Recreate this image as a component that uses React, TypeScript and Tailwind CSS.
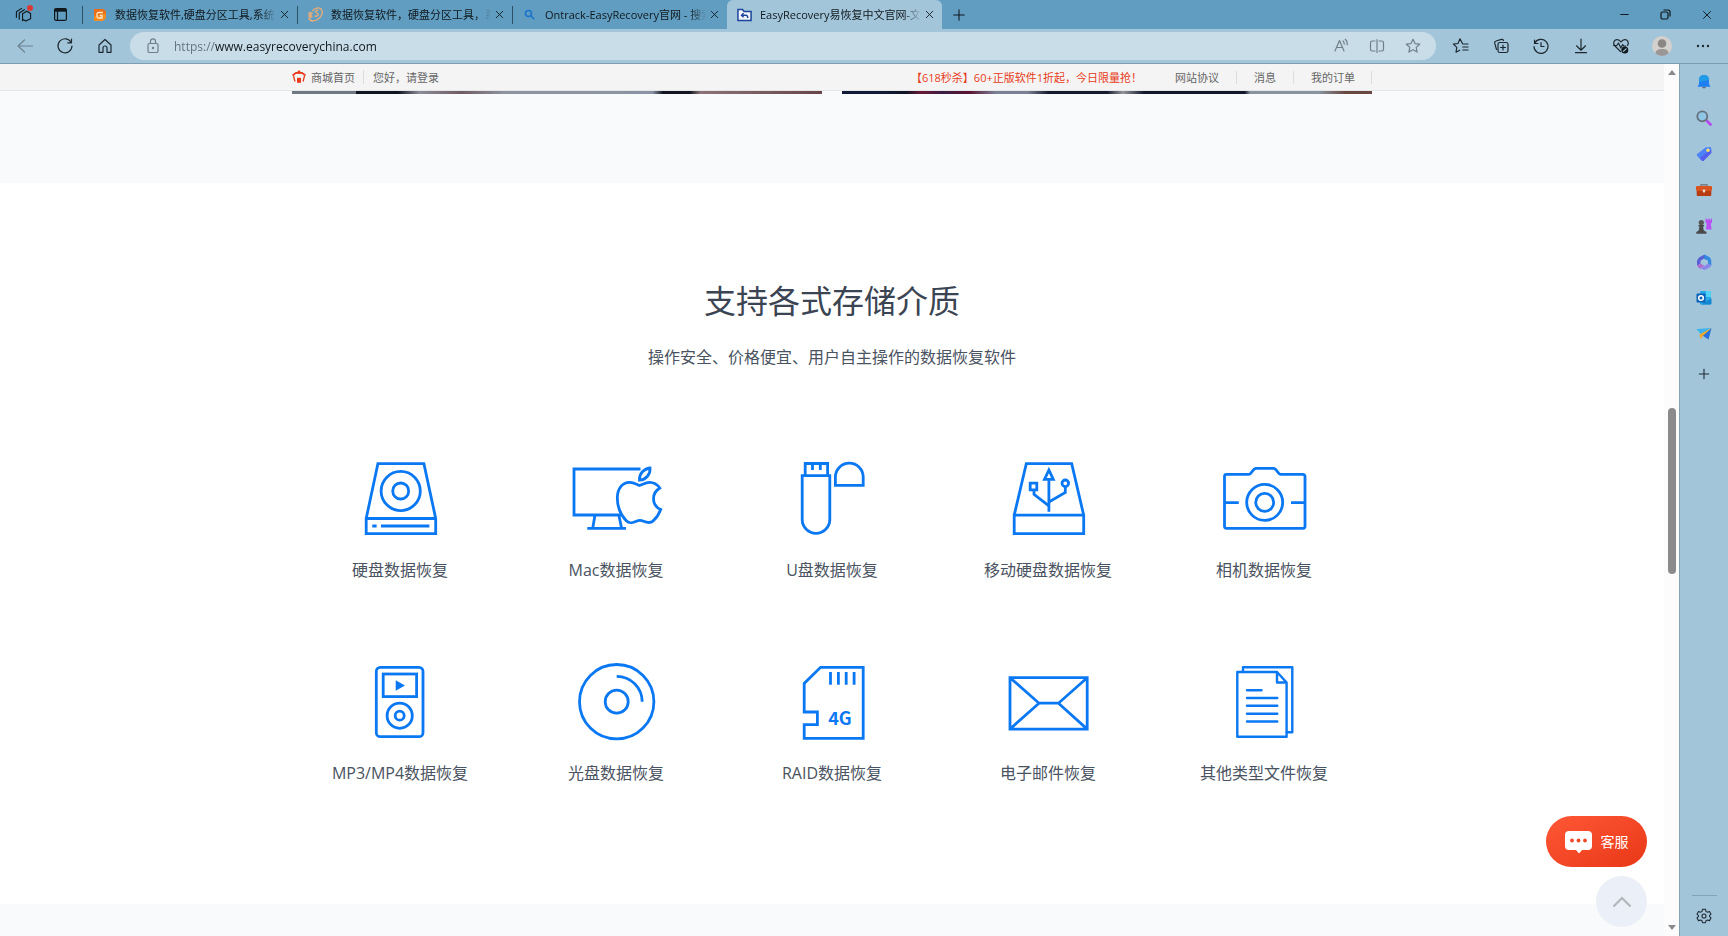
import type { ReactNode } from 'react';
import { Minus, Plus, X } from 'lucide-react';

const BLUE = '#0a78f2';

const tabs = [
  { title: '数据恢复软件,硬盘分区工具,系统', icon: <DiskGeniusLogo /> },
  { title: '数据恢复软件，硬盘分区工具，系', icon: <EsLogo /> },
  { title: 'Ontrack-EasyRecovery官网 - 搜索', icon: <SearchLogo /> },
  {
    title: 'EasyRecovery易恢复中文官网-文',
    icon: <FolderLogo />,
    active: true,
  },
];

const media = [
  { label: '硬盘数据恢复', icon: <HardDisk /> },
  { label: 'Mac数据恢复', icon: <MacIcon /> },
  { label: 'U盘数据恢复', icon: <UsbStick /> },
  { label: '移动硬盘数据恢复', icon: <PortableDisk /> },
  { label: '相机数据恢复', icon: <CameraIcon /> },
  { label: 'MP3/MP4数据恢复', icon: <PlayerIcon /> },
  { label: '光盘数据恢复', icon: <DiscIcon /> },
  { label: 'RAID数据恢复', icon: <SdCard /> },
  { label: '电子邮件恢复', icon: <MailIcon /> },
  { label: '其他类型文件恢复', icon: <FilesIcon /> },
];

/* ---------- media icons ---------- */

function Drawing({ children }: { children: ReactNode }) {
  return (
    <svg
      width="100"
      height="80"
      viewBox="0 0 100 80"
      fill="none"
      stroke={BLUE}
      strokeWidth="2.8"
      aria-hidden="true"
    >
      {children}
    </svg>
  );
}

function HardDisk() {
  return (
    <Drawing>
      <path d="M16.2 59.5 27.9 4.7h46l11.8 54.8v15.2H16.2V59.5h69.5" />
      <circle cx="50.7" cy="32" r="19.6" />
      <circle cx="50.7" cy="32" r="8" />
      <path d="M22.3 67h4.3M31 67h48.4" />
    </Drawing>
  );
}

function MacIcon() {
  return (
    <Drawing>
      <path d="M74.5 10H8v46h47.5M29 56l-2.3 13.3M52.8 56l2.8 13.3M21.3 69.4H60" />
      <path d="M73.5 26.5C69.5 24.5 67 23.3 63.5 23.3 56.5 23.3 51.3 29.5 51.3 39c0 8.5 3.5 17 9 22.8 3.5 3.7 7 1.7 10 .4 2.5-1 4.800-1 7.300 0 3.200 1.400 6.300 2.600 9.600-.3 3.300-3 5.900-7 7.500-11.400-4.500-2-7.200-6-7.200-10.800 0-4.600 2.400-8.300 6.300-10.700-2.800-4-6.500-5.700-10.300-5.700-3.700 0-6.500 2-10 3.200Z" />
      <path d="M73.5 21.2c-.6-6 3.9-11.3 10.5-12.2.6 6.2-3.8 11.7-10.5 12.2Z" />
    </Drawing>
  );
}

function UsbStick() {
  return (
    <Drawing>
      <path d="M23.2 16.6V4.5h22.4v12.1M30.5 5v6M38.3 5v6" />
      <path d="M20.2 16.7h27.6V60.5a13.8 13.8 0 0 1-27.6 0Z" />
      <path d="M53.4 26.3V18a13.9 13.9 0 0 1 27.8 0v8.3Z" />
    </Drawing>
  );
}

function PortableDisk() {
  return (
    <Drawing>
      <path d="M16.2 56.2 28.3 4.7h45.4l12 51.5v18.5H16.2V56.2h69.5" />
      <path d="M50.9 11 46.5 20.3h8.8ZM50.9 20v32.7" />
      <path d="M32.2 24.2h6.6v6.6h-6.6ZM36 31v4.3l14.900 11.600" />
      <circle cx="67.3" cy="24.3" r="3.3" />
      <path d="M67.3 27.7v5.8l-16.4 9.5" />
    </Drawing>
  );
}

function CameraIcon() {
  return (
    <Drawing>
      <path d="M12.5 15.3H35c3 0 3.4-6 7-6h17.5c3.6 0 4 6 7 6H89a2 2 0 0 1 2 2v50a2 2 0 0 1-2 2H12.500a2 2 0 0 1-2-2v-50a2 2 0 0 1 2-2Z" />
      <circle cx="50.7" cy="43.4" r="18" />
      <circle cx="50.7" cy="43.4" r="9" />
      <path d="M10.5 43.700h14.300M77 43.700h14" />
    </Drawing>
  );
}

function PlayerIcon() {
  return (
    <Drawing>
      <rect x="26.3" y="5.3" width="46.7" height="69.4" rx="4" />
      <rect x="33.2" y="12" width="33.4" height="22.6" />
      <path d="m45.7 18.3 9.3 5.2-9.3 5.2Z" fill={BLUE} stroke="none" />
      <circle cx="49.7" cy="53.7" r="12.6" />
      <circle cx="49.7" cy="53.7" r="4.5" />
    </Drawing>
  );
}

function DiscIcon() {
  return (
    <Drawing>
      <circle cx="50.7" cy="39.7" r="37.2" />
      <circle cx="50.7" cy="39.7" r="11.5" />
      <path d="M50.7 14.3A25.5 25.5 0 0 1 76.2 39.8" />
    </Drawing>
  );
}

function SdCard() {
  return (
    <Drawing>
      <path d="M38.6 5.3h42.6v71H22.2V62.7h13.2V50H22.2V21.4Z" />
      <path d="M48.5 10v12.7M56.4 10v12.7M64.2 10v12.7M72.1 10v12.7" />
      <text
        x="58"
        y="63"
        textAnchor="middle"
        fontSize="18"
        fontWeight="700"
        fontFamily="Noto Sans CJK SC, sans-serif"
        fill={BLUE}
        stroke="none"
      >
        4G
      </text>
    </Drawing>
  );
}

function MailIcon() {
  return (
    <Drawing>
      <path d="M12 15.7h77.2v51.4H12ZM12 15.7 41 41.2h19.5L89.2 15.7M12 67.1 41 41.2M89.2 67.1 60.5 41.2" />
    </Drawing>
  );
}

function FilesIcon() {
  return (
    <Drawing>
      <g strokeWidth="2.4" strokeLinejoin="round" strokeLinecap="round">
        <path d="M29 10V5.3h49.3v64.9h-5.5" />
        <path d="M23.3 10H63l9.6 10.5v54.3H23.3ZM63 10v10.5h9.6" />
        <path d="M33 28.3h14.5M33 36h30.3M33 43.8h30.3M33 51.7h30.3M33 59.5h30.3" />
      </g>
    </Drawing>
  );
}

/* ---------- tab logos ---------- */

function DiskGeniusLogo() {
  return (
    <svg width="14" height="14" viewBox="0 0 14 14" aria-hidden="true">
      <path d="M1 1h7.5A4.5 4.5 0 0 1 13 5.5v3A4.5 4.5 0 0 1 8.5 13H1Z" fill="#f58a1f" />
      <path d="M1 1h7.5A4.5 4.5 0 0 1 13 5.5L1 8Z" fill="#ee6c14" />
      <path d="M10 4.5H5.5A1.5 1.5 0 0 0 4 6v2.5A1.500 1.500 0 0 0 5.500 10H9V7.500H6.800" fill="none" stroke="#ffe9c8" strokeWidth="1.300" />
    </svg>
  );
}

function EsLogo() {
  return (
    <svg width="15" height="15" viewBox="0 0 15 15" fill="none" stroke="#efad74" strokeWidth="1.3" aria-hidden="true">
      <path d="M1 11c.5 2 2.500 3.200 5 2.800C10.500 13 14.300 9 14.300 5 14.200 1.500 11 0 7.500 1.500 6 2.200 5 3.200 4.500 4.300" />
      <path d="M4.500 6H1.200v4h3.300M1.200 8h3M10.500 3.300C8 2.800 6.800 4.500 8.200 5.500 9.800 6.300 11 7.200 9.500 8.700 8.500 9.400 7.200 9.200 6.500 8.700" />
    </svg>
  );
}

function SearchLogo() {
  return (
    <svg width="14" height="14" viewBox="0 0 14 14" fill="none" stroke="#1b74cc" strokeWidth="1.600" aria-hidden="true">
      <circle cx="5.500" cy="5.500" r="3" />
      <path d="m7.800 7.800 3.400 3.400" />
    </svg>
  );
}

function FolderLogo() {
  return (
    <svg width="15" height="14" viewBox="0 0 16 14" fill="none" aria-hidden="true">
      <path d="M1 1.200h5l1.500 2H15v9.600H1Z" fill="#f2f6fc" stroke="#1c449c" strokeWidth="1.600" />
      <path d="M7 5 4.800 7.200 7 9.400M5 7.200h4.500c1.500 0 2 1 2 3" stroke="#1c449c" strokeWidth="1.500" />
    </svg>
  );
}

/* ---------- toolbar icons ---------- */

function Line({ children, size = 18 }: { children: ReactNode; size?: number }) {
  return (
    <svg
      width={size}
      height={size}
      viewBox="0 0 18 18"
      fill="none"
      stroke="currentColor"
      strokeWidth="1.2"
      strokeLinecap="round"
      strokeLinejoin="round"
      aria-hidden="true"
    >
      {children}
    </svg>
  );
}

const pillTools = [
  {
    name: '大声朗读',
    icon: (
      <Line>
        <path d="M3 14 7.500 3.500 12 14M4.500 10.500h6M11 4c1 1 1.300 2 1.300 3.200M13.200 2.300c1.700 1.400 2.300 3.200 2 5.400" />
      </Line>
    ),
  },
  {
    name: '拆分屏幕',
    icon: (
      <Line>
        <path d="M7 14H4.200A1.700 1.700 0 0 1 2.500 12.300V5.700A1.700 1.700 0 0 1 4.200 4H7M11 4h2.800a1.700 1.700 0 0 1 1.700 1.700v6.600a1.700 1.700 0 0 1-1.700 1.700H11M9 2.500v13" />
      </Line>
    ),
  },
  {
    name: '收藏此页',
    icon: (
      <Line>
        <path d="m9 2.300 2 4.300 4.700.6-3.500 3.200.9 4.700L9 12.800l-4.100 2.300.9-4.700-3.500-3.200L7 6.600Z" />
      </Line>
    ),
  },
];

const toolbarTools = [
  {
    name: '收藏夹',
    icon: (
      <Line>
        <path d="M10.300 6.300 8 1.800 6 6.500l-4.600.6 3.400 3.300-.8 4.800 3.700-2M10.800 7H16M10.800 10H16M10.800 13H16" />
      </Line>
    ),
  },
  {
    name: '集锦',
    icon: (
      <Line>
        <path d="M4.500 12.500 2.700 6.200A1.800 1.800 0 0 1 4 4l5.500-1.600a1.800 1.800 0 0 1 2 1" />
        <rect x="6" y="5.500" width="10" height="10" rx="1.800" />
        <path d="M11 8v5M8.500 10.500h5" />
      </Line>
    ),
  },
  {
    name: '历史记录',
    icon: (
      <Line>
        <path d="M2.500 3v3.500H6M2.700 6.300A7 7 0 1 1 2 9.500M9 5.500v4h3" />
      </Line>
    ),
  },
  {
    name: '下载',
    icon: (
      <Line>
        <path d="M9 2v11M4.500 8.800 9 13.200l4.500-4.400M3.500 15.700h11" />
      </Line>
    ),
  },
  {
    name: '浏览器概要',
    icon: (
      <Line>
        <path d="M8.500 14.500 2.500 8.500C.8 6 2 3 4.700 2.700 6.500 2.500 8 3.500 9 5c1-1.500 2.500-2.500 4.300-2.300C16 3 17.200 6 15.500 8.500M1.500 8.500h3.300L6.500 6l2.300 5 1.900-3.500 1 1.500h2" />
        <circle cx="12.800" cy="13" r="3.500" fill="#11191e" stroke="none" />
        <path d="m11.400 14.200 2.700-2.300" stroke="#a3c5da" />
      </Line>
    ),
  },
];

/* ---------- sidebar icons ---------- */

function Glyph({ children }: { children: ReactNode }) {
  return (
    <svg width="16" height="16" viewBox="0 0 16 16" fill="none" aria-hidden="true">
      {children}
    </svg>
  );
}

const sidebarApps = [
  {
    name: '通知',
    icon: (
      <Glyph>
        <path d="M6 12.500h4a2 2 0 0 1-4 0Z" fill="#65707a" />
        <path d="M8 1c3.200 0 5 2.300 5 5v4l1.500 2.800h-13L3 10V6c0-2.700 1.800-5 5-5Z" fill="#1f7ff0" />
        <path d="M8 1c3.200 0 5 2.300 5 5L3 8V6c0-2.700 1.800-5 5-5Z" fill="#229be8" />
      </Glyph>
    ),
  },
  {
    name: '搜索',
    icon: (
      <Glyph>
        <path d="m11 11 3.500 3.500" stroke="#b44af0" strokeWidth="2.800" strokeLinecap="round" />
        <circle cx="6.300" cy="6.300" r="5" fill="#8fc6e6" stroke="#67707a" strokeWidth="1.800" />
      </Glyph>
    ),
  },
  {
    name: '购物',
    icon: (
      <Glyph>
        <path d="M9.500 1.500 15 1l.3 6-7.400 7.600a1.500 1.500 0 0 1-2.100 0L1.200 10a1.500 1.500 0 0 1 0-2.100Z" fill="#4c84f8" />
        <path d="m15.300 7-7.400 7.600a1.500 1.500 0 0 1-2.100 0L3.500 12.300 15.200 3Z" fill="#5560ee" />
        <circle cx="12" cy="4.300" r="1.700" fill="#ffe16a" />
      </Glyph>
    ),
  },
  {
    name: '工具',
    icon: (
      <Glyph>
        <path d="M5 4.500V2.700h6v1.800" stroke="#7a8288" strokeWidth="1.400" />
        <rect y="4" width="16" height="5" rx="1" fill="#d9541e" />
        <path d="M.7 9h14.600v4a1 1 0 0 1-1 1H1.700a1 1 0 0 1-1-1Z" fill="#b83a10" />
        <rect x="6.800" y="7.200" width="2.400" height="3.400" rx=".8" fill="#e8d8cc" />
      </Glyph>
    ),
  },
  {
    name: '游戏',
    icon: (
      <Glyph>
        <path d="M9.500.500h1.300v1.300h1.400V.5h1.400v1.300H15V.5h1v4l-1.200 1 .8 6H10l.8-6-1.300-1Z" fill="#b950f5" />
        <circle cx="5.300" cy="4.500" r="2.600" fill="#555" />
        <path d="M2.500 7h5.600v1.500H7l.8 4L10.500 14v1.800H.3V14l2.400-1.500.8-4h-1Z" fill="#4a4a4a" />
      </Glyph>
    ),
  },
  {
    name: 'Microsoft 365',
    icon: (
      <Glyph>
        <path d="M8.500.5 3 3.500 1 6.500v5l3.500-1.700v-3L8 4.500l3.500 2Z" fill="#5a5fd6" />
        <path d="m8.500.5 5.500 3 1.300 3v5.200L12 9.500v-3L8 4.500Z" fill="#2f8ae0" />
        <path d="m15.300 11.700-2 2-5 2.200-4-2 4.200-2L12 9.500Z" fill="#8b86ea" />
        <path d="m1 11.500 3.500-1.700 4 2-4.200 2.200 2 1.500-3.500-1.500Z" fill="#b06ad0" />
      </Glyph>
    ),
  },
  {
    name: 'Outlook',
    icon: (
      <Glyph>
        <rect x="4" y="1" width="11" height="13.500" rx="1" fill="#28a8ea" />
        <path d="M10 1h4a1 1 0 0 1 1 1v5h-5Z" fill="#50d0f5" />
        <path d="m5 14.500 10.500-6v5a1 1 0 0 1-1 1Z" fill="#1485d0" />
        <rect x=".5" y="3.500" width="9" height="9" rx="1" fill="#0a62b8" />
        <circle cx="5" cy="8" r="2.300" stroke="#fff" strokeWidth="1.500" />
      </Glyph>
    ),
  },
  {
    name: '投放',
    icon: (
      <Glyph>
        <path d="M.5 3 15.500 2 5 8.500Z" fill="#3cb4f0" />
        <path d="M15.500 2 12.500 13.500 6.500 9.500Z" fill="#2470dc" />
        <path d="M15.500 2 3.500 8.500l1 4.500 2.500-3.200Z" fill="#f0a828" />
      </Glyph>
    ),
  },
];

/* ---------- browser chrome ---------- */

function TabBar() {
  return (
    <header className="flex h-[29px] shrink-0 items-center bg-[#619dc0] text-[#10181d]">
      <div className="flex w-[82px] items-center gap-[22px] pl-[15px]">
        <button aria-label="工作区" className="relative">
          <Line size={17}>
            <path d="M8 15.500V8.300L12.500 5.500 16.500 8v5.500L11.500 16 8 14M4.500 14V7.500L10 4M1.500 12V6L7 2.500" />
          </Line>
          <span className="absolute -top-px -right-px size-1.5 rounded-full bg-[#d93a34]" />
        </button>
        <button aria-label="标签页操作">
          <svg width="13" height="13" viewBox="0 0 13 13" fill="none" stroke="currentColor" strokeWidth="1.200">
            <rect x=".6" y=".6" width="11.800" height="11.800" rx="1.500" />
            <path d="M.6 2.300h11.800" strokeWidth="2.800" />
            <path d="M3.500 3v9" />
          </svg>
        </button>
      </div>
      {tabs.map((t) => (
        <div
          key={t.title}
          className={
            t.active
              ? 'flex h-full w-[215px] items-center rounded-t-md bg-[#a3c5da] pr-1.5 pl-2.5'
              : 'flex h-[18px] w-[215px] items-center border-l border-[#2c5064] pr-1.5 pl-2.5'
          }
        >
          <button className="flex min-w-0 flex-1 items-center gap-2 text-left text-[11px] leading-4">
            <span className="shrink-0">{t.icon}</span>
            <span className="min-w-0 flex-1 overflow-hidden mask-r-from-90% whitespace-nowrap">
              {t.title}
            </span>
          </button>
          <button aria-label="关闭标签页" className="ml-0.5">
            <X size={13} strokeWidth={1.600} />
          </button>
        </div>
      ))}
      <button aria-label="新建标签页" className="ml-2">
        <Plus size={18} strokeWidth={1.400} />
      </button>
      <div className="ml-auto flex items-center gap-7 pr-3.5">
        <button aria-label="最小化">
          <Minus size={13} strokeWidth={1.800} />
        </button>
        <button aria-label="还原">
          <svg width="13" height="13" viewBox="0 0 13 13" fill="none" stroke="currentColor" strokeWidth="1.200">
            <rect x="2" y="4" width="7" height="7" rx="1.500" />
            <path d="M4.500 2h4.700A1.800 1.800 0 0 1 11 3.800v4.700" />
          </svg>
        </button>
        <button aria-label="关闭">
          <X size={14} strokeWidth={1.600} />
        </button>
      </div>
    </header>
  );
}

function AddressBar() {
  return (
    <div className="flex h-[35px] shrink-0 items-center border-b border-[#7d9db3] bg-[#a3c5da] text-[#1d2930]">
      <nav className="flex w-[130px] items-center gap-[22px] pl-4">
        <button aria-label="后退" className="text-[#6c8492]">
          <Line>
            <path d="M8.500 3 2 9l6.500 6M2.300 9H16.500" />
          </Line>
        </button>
        <button aria-label="刷新">
          <Line>
            <path d="M15.200 5.500A7 7 0 1 0 16 9M15.500 2v3.800h-3.800" />
          </Line>
        </button>
        <button aria-label="主页">
          <Line>
            <path d="M3 8 9 2.500 15 8v7.300h-4V11a2 2 0 0 0-4 0v4.300H3Z" />
          </Line>
        </button>
      </nav>
      <div className="flex h-7 flex-1 items-center rounded-full bg-[#c9dde8] pr-3.5 pl-3.5 text-[#6f8089]">
        <Line>
          <rect x="4" y="6.500" width="10" height="9" rx="1.300" />
          <path d="M6.500 6.500V4.300a2.500 2.500 0 0 1 5 0v2.200" />
          <circle cx="9" cy="11" r=".6" fill="currentColor" />
        </Line>
        <input
          type="text"
          aria-label="地址栏"
          defaultValue="https://www.easyrecoverychina.com"
          className="ml-3 h-6 min-w-0 flex-1 bg-[linear-gradient(90deg,#5f707a_41px,#10181d_41px)] bg-clip-text text-xs text-transparent outline-none"
        />
        <div className="flex items-center gap-[18px]">
          {pillTools.map((t) => (
            <button key={t.name} aria-label={t.name}>
              {t.icon}
            </button>
          ))}
        </div>
      </div>
      <div className="flex items-center gap-[22px] pr-4 pl-4">
        {toolbarTools.map((t) => (
          <button key={t.name} aria-label={t.name}>
            {t.icon}
          </button>
        ))}
        <button aria-label="个人资料">
          <svg width="20" height="20" viewBox="0 0 20 20">
            <circle cx="10" cy="10" r="10" fill="#d3d0cd" />
            <circle cx="10" cy="7.500" r="4.300" fill="#8a8786" />
            <path d="M3.500 17.500c0-3 2-4.500 6.500-4.500s6.500 1.500 6.500 4.500A10 10 0 0 1 10 20a10 10 0 0 1-6.500-2.500Z" fill="#9a9796" />
          </svg>
        </button>
        <button aria-label="设置及其他">
          <svg width="18" height="18" viewBox="0 0 18 18" fill="currentColor">
            <circle cx="4" cy="9" r="1.200" />
            <circle cx="9" cy="9" r="1.200" />
            <circle cx="14" cy="9" r="1.200" />
          </svg>
        </button>
      </div>
    </div>
  );
}

function Sidebar() {
  return (
    <aside className="flex w-[49px] shrink-0 flex-col items-center border-l border-[#86a3b6] bg-[#a3c5da] pt-2.5 pb-3 text-[#1d2930]">
      <div className="flex flex-col gap-5">
        {sidebarApps.map((a) => (
          <button key={a.name} aria-label={a.name}>
            {a.icon}
          </button>
        ))}
      </div>
      <button aria-label="自定义" className="mt-6">
        <Plus size={16} strokeWidth={1.600} />
      </button>
      <div className="mt-auto w-[25px] border-t border-[#83a4b8]" />
      <button aria-label="设置" className="mt-3">
        <Line size={16}>
          <circle cx="9" cy="9" r="2.300" />
          <path d="M7.300 1.500h3.400l.5 2.300 1.700 1 2.300-.8 1.700 3L15.200 8.500v1.200l1.700 1.500-1.700 3-2.300-.8-1.700 1-.5 2.200H7.300l-.5-2.200-1.700-1-2.300.8-1.700-3L2.800 9.700V8.500L1.100 7l1.700-3 2.300.8 1.700-1Z" />
        </Line>
      </button>
    </aside>
  );
}

function Scrollbar() {
  return (
    <div className="flex w-[15px] shrink-0 flex-col items-center bg-[#fcfcfc] py-1.5">
      <svg width="8" height="5" viewBox="0 0 8 5" fill="#8a8a8a">
        <path d="M4 0 8 5H0Z" />
      </svg>
      <div className="flex w-full flex-1 flex-col items-center">
        <div className="grow-[333]" />
        <div className="w-2 grow-[165] rounded-full bg-[#8b8b8b]" />
        <div className="grow-[351]" />
      </div>
      <svg width="8" height="5" viewBox="0 0 8 5" fill="#8a8a8a">
        <path d="M0 0h8L4 5Z" />
      </svg>
    </div>
  );
}

/* ---------- page ---------- */

function ShopBar() {
  return (
    <div className="border-b border-[#e4e5e6] bg-[#f4f4f4]">
      <div className="mx-auto flex h-[26px] max-w-[1080px] items-center text-[11px] leading-[13px] text-[#666]">
        <a href="#home" className="flex items-center gap-[5px] border-r border-[#ddd] pr-2">
          <svg width="14" height="14" viewBox="0 0 14 14" fill="none" stroke="#e8391c" aria-hidden="true">
            <path d="M.5 5.500 4 2.800h6l3.500 2.700" strokeWidth="1.800" />
            <path d="M7 0 10 3.500H4Z" fill="#e8391c" stroke="none" />
            <path d="M1.500 6 3 11.500M12.500 6 11 11.500" strokeWidth="1.300" />
            <path d="M5 7.800h4v5H5Z" fill="#e8391c" stroke="none" />
          </svg>
          商城首页
        </a>
        <a href="#login" className="pl-[9px]">
          您好，请登录
        </a>
        <a href="#sale" className="mr-4 ml-auto text-[#e83c20]">
          【618秒杀】60+正版软件1折起，今日限量抢！
        </a>
        <a href="#terms" className="border-r border-[#ddd] px-[17px]">
          网站协议
        </a>
        <a href="#messages" className="border-r border-[#ddd] px-[17px]">
          消息
        </a>
        <a href="#orders" className="border-r border-[#ddd] pr-4 pl-[17px]">
          我的订单
        </a>
      </div>
    </div>
  );
}

function MediaSection() {
  return (
    <section className="bg-white pt-[98px] pb-[119px] text-center">
      <h2 className="text-[32px] leading-10 text-[#3a4452]">支持各式存储介质</h2>
      <p className="mt-6 text-base text-[#4a5361]">
        操作安全、价格便宜、用户自主操作的数据恢复软件
      </p>
      <ul className="mx-auto mt-[90px] grid max-w-[1080px] grid-cols-5 gap-y-20">
        {media.map((m) => (
          <li key={m.label}>
            <a href="#media" className="flex flex-col items-center text-base text-[#4a5361]">
              {m.icon}
              <span className="mt-[19px]">{m.label}</span>
            </a>
          </li>
        ))}
      </ul>
    </section>
  );
}

export default function App() {
  return (
    <div className="flex h-screen flex-col overflow-hidden font-['Open_Sans','Noto_Sans_CJK_SC',sans-serif]">
      <TabBar />
      <AddressBar />
      <div className="flex min-h-0 flex-1">
        <main className="relative min-w-0 flex-1 overflow-hidden bg-[#f8fafc]">
          <ShopBar />
          {/* bottom edge of the banners scrolled under the bar */}
          <div className="mx-auto mb-[89px] flex max-w-[1080px] gap-5">
            <div className="h-[3px] flex-1 bg-[linear-gradient(90deg,#707884_12%,#11151f_12%,#11151f_20%,#8a8c98_24%,#705b62_32%,#8e93a0_40%,#8b93a4_68%,#12151f_70%,#12151f_75%,#8a7378_77%,#694448)]" />
            <div className="h-[3px] flex-1 bg-[linear-gradient(90deg,#101a36_8%,#101225_12%,#6b1734_15%,#3b1d45_19%,#5b1230_24%,#7b8096_29%,#7b8096_35%,#171a2c_39%,#171a2c_50%,#93969c_53%,#14172c_57%,#14172c_76%,#87939e_77%,#87939e_90%,#6b4742_95%)]" />
          </div>
          <MediaSection />
          <div className="absolute right-[17px] bottom-[9px] flex flex-col items-end gap-[9px]">
            <button className="flex h-[51px] w-[101px] items-center justify-center gap-[9px] rounded-full bg-linear-to-br from-[#ff5735] to-[#e83716] text-sm text-white">
              <svg width="27" height="24" viewBox="0 0 27 24" aria-hidden="true">
                <path d="M4 1h19a4 4 0 0 1 4 4v11a4 4 0 0 1-4 4h-6l-3 3.500L11 20H4a4 4 0 0 1-4-4V5a4 4 0 0 1 4-4Z" fill="#fff" />
                <g fill="#f04a2a">
                  <circle cx="7" cy="10.500" r="1.900" />
                  <circle cx="13.500" cy="10.500" r="1.900" />
                  <circle cx="20" cy="10.500" r="1.900" />
                </g>
              </svg>
              客服
            </button>
            <button
              aria-label="回到顶部"
              className="flex size-[51px] items-center justify-center rounded-full bg-[#ebeff7]"
            >
              <svg width="20" height="12" viewBox="0 0 20 12" fill="none" stroke="#b3b6bb" strokeWidth="2.200">
                <path d="m1.500 10.500 8.500-8.500 8.500 8.500" />
              </svg>
            </button>
          </div>
        </main>
        <Scrollbar />
        <Sidebar />
      </div>
    </div>
  );
}
